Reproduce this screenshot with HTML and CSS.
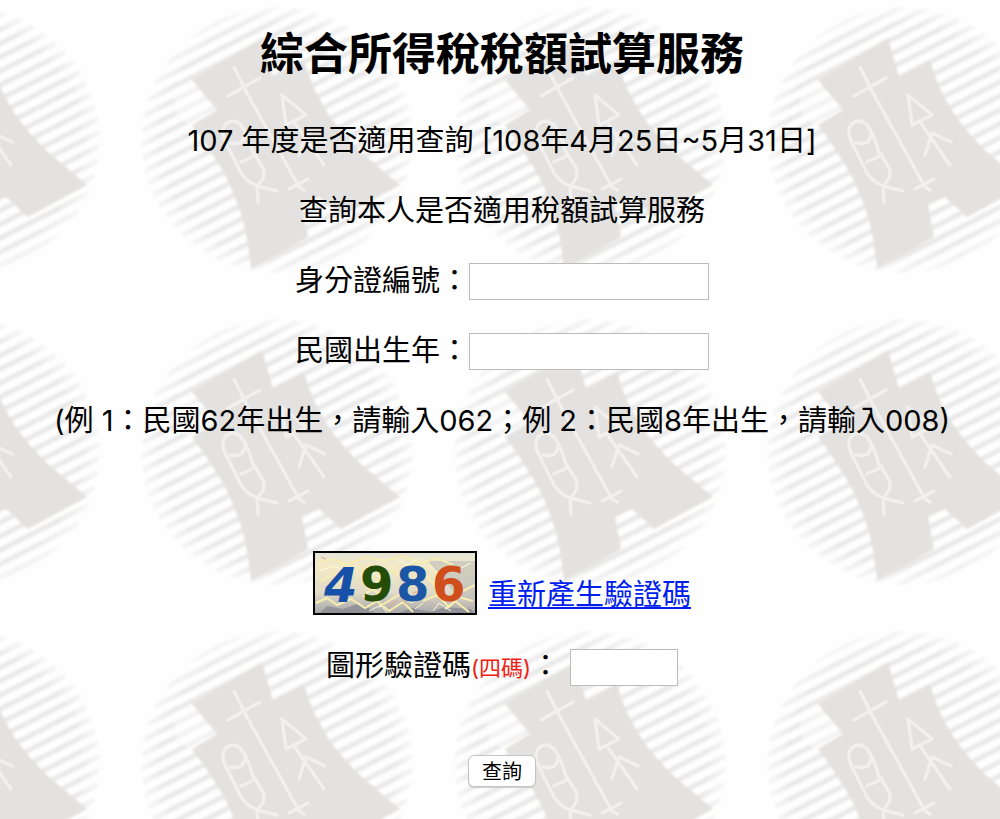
FILE: index.html
```html
<!DOCTYPE html>
<html lang="zh-Hant">
<head>
<meta charset="utf-8">
<title>綜合所得稅稅額試算服務</title>
<link rel="stylesheet" href="styles.css">
</head>

<body>
<form class="query" action="#" method="post">
	<h1>綜合所得稅稅額試算服務</h1>
	<p>107 年度是否適用查詢 [108年4月25日~5月31日]</p>
	<p>查詢本人是否適用稅額試算服務</p>
	<div class="row">
		<label for="idn">身分證編號：</label>
		<input type="text" id="idn" name="idn" maxlength="10">
	</div>
	<div class="row">
		<label for="birth">民國出生年：</label>
		<input type="text" id="birth" name="birth" maxlength="3">
	</div>
	<p>(例 1：民國62年出生，請輸入062；例 2：民國8年出生，請輸入008)</p>
	<div class="captcha">
		<svg width="164" height="64" viewBox="0 0 164 64" role="img" aria-label="圖形驗證碼">
			<defs>
				<linearGradient id="sky" x1="0" y1="0" x2="0" y2="1">
					<stop offset="0" stop-color="#e2e3dd"/>
					<stop offset=".25" stop-color="#f4eac4"/>
					<stop offset=".65" stop-color="#e0dac8"/>
					<stop offset="1" stop-color="#a3a3a6"/>
				</linearGradient>
			</defs>
			<rect width="164" height="64" fill="url(#sky)"/>
			<path d="M115 10h48v42l-20-8z" fill="#b9bab8" opacity=".6"/>
			<path d="M6 63L14 55L30 58L44 53L56 57L62 63zM84 63L98 57L118 61L132 56L158 58L162 63z" fill="#8b8b94" opacity=".8"/>
			<g fill="none" stroke="#f8edb0" stroke-width="2">
				<path d="M4 12L20 8L34 14L52 6L72 10L90 5L108 12L124 7L140 14M3 52L14 47L24 54L38 48L52 57L64 50L76 60L90 51L100 61M50 16L64 30L80 20L96 32L110 22L122 34M110 50L124 44L136 56L146 46L160 50M66 56L82 46L94 40M132 58L142 50L156 61M98 8L106 22L96 36M150 40L162 34M8 30L22 22L30 34M50 46L58 38L70 44"/>
			</g>
			<g fill="none" stroke="#fffbe0" stroke-width="1">
				<path d="M6 20L20 15L40 22M56 60L68 54L74 62M84 8L94 14L104 8M88 44L98 52L112 45M116 14L128 24M120 60L126 52L138 60M146 18L158 12M60 22L70 28M102 58L110 52"/>
			</g>
			<path d="M76 54l8-4M88 48l5 5M100 42l7-2M8 6l5 2" stroke="#e8a58c" fill="none"/>
			<g font-family="DejaVu Sans" font-weight="bold" font-size="48">
				<text x="11" y="51" fill="#1650a8" font-style="oblique">4</text>
				<text x="47" y="50" fill="#244d08">9</text>
				<text x="83" y="50" fill="#1c57a6">8</text>
				<text x="119" y="50" fill="#d04e1c">6</text>
			</g>
			<rect x="1" y="1" width="162" height="62" fill="none" stroke="#000" stroke-width="2"/>
		</svg>
		<a href="#">重新產生驗證碼</a>
	</div>
	<div class="row code">
		<label for="code">圖形驗證碼<span class="note">(四碼)</span>：</label>
		<input type="text" id="code" name="code" class="short" maxlength="4">
	</div>
	<button type="submit">查詢</button>
</form>
</body>
</html>
```

FILE: styles.css
```css
*{margin:0; padding:0; box-sizing:border-box;}
body{
	font:29px/40px Inter, "Noto Sans CJK TC", sans-serif;
	color:#000;
	background:#fefefe url("data:image/svg+xml,%3Csvg xmlns='http://www.w3.org/2000/svg' width='313' height='312' viewBox='0 0 313 312'%3E%3Cdefs%3E%3Cpattern id='s' width='20' height='12.4' patternUnits='userSpaceOnUse' patternTransform='rotate(-27)'%3E%3Crect y='3' width='20' height='5' fill='%23e9e9e9'/%3E%3C/pattern%3E%3CradialGradient id='g'%3E%3Cstop offset='.86' stop-color='%23fff'/%3E%3Cstop offset='1' stop-color='%23555'/%3E%3C/radialGradient%3E%3Cmask id='m'%3E%3Cellipse cx='160' cy='142' rx='136' ry='133' fill='url(%23g)'/%3E%3C/mask%3E%3Cfilter id='b'%3E%3CfeGaussianBlur stdDeviation='1.2'/%3E%3C/filter%3E%3C/defs%3E%3Cg filter='url(%23b)'%3E%3Cellipse cx='160' cy='142' rx='136' ry='133' fill='url(%23s)' mask='url(%23m)'/%3E%3Cpath d='M75 82L100 112L75 128L60 120L55 92Z' fill='%23fefefe' opacity='.5'/%3E%3Cpath d='M75 82L145 40L156 79L187 62Q194 88 207 109Q219 130 245 155L283 187L224 219L202 199L185 207L191 239L134 271Q130 228 119 202Q110 178 97 159Q87 142 75 127L100 112Z' fill='%23e3e2e0'/%3E%3C/g%3E%3Cg fill='none' stroke='%23f1f0ee' stroke-width='3.5' stroke-linecap='round' stroke-linejoin='round'%3E%3Cpath d='M117 69L130 95L182 189M111 98L143 80M172 191L191 181M182 189L187 192M124 127Q115 119 108 127Q103 134 109 145L124 175Q130 184 140 188L160 193M124 127Q132 138 135 152L146 170Q150 179 140 188L141 204M113 145Q127 148 128 136M124 164L139 157M165 97L189 117L169 127ZM177 124L207 167M189 135L182 157M189 135L208 144'/%3E%3C/g%3E%3C/svg%3E") 117px -2px;
}
.query{padding:22px 8px 32px 12px; text-align:center;}
h1{font-size:44px; line-height:64px; margin-bottom:35px;}
p{margin-bottom:30px;}
.row{display:flex; justify-content:center; align-items:center; margin-bottom:30px;}
input{width:240px; height:37px; padding:0 6px; border:1px solid #bbb; background:#fff; font:inherit;}
.short{width:108px;}
.captcha{display:flex; justify-content:center; align-items:flex-end; gap:11px; margin:110px 0 31px;}
.captcha svg{display:block;}
a{color:#001eee; text-decoration:underline;}
.code{gap:10px; margin-bottom:61px;}
.note{font-size:22px; color:#f02010;}
button{height:32px; padding:0 13px; border:1px solid #c4c4c4; border-radius:6px; background:#fff; box-shadow:0 1px 1px #ccc; font:20px/28px "Noto Sans CJK TC", sans-serif; color:#000;}
```
